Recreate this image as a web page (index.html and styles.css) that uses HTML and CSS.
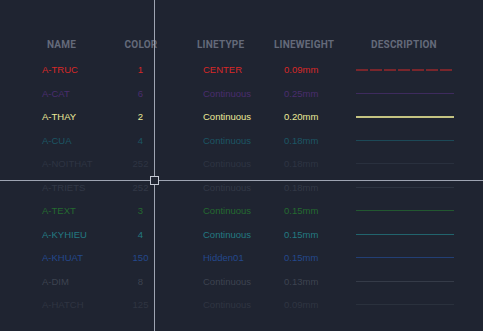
FILE: index.html
```html
<!DOCTYPE html>
<html>
<head>
<meta charset="utf-8">
<link rel="stylesheet" href="styles.css">
</head>
<body>
<div class="screen">
  <div class="table">
    <div class="row head">
      <div class="c1 h">NAME</div>
      <div class="c2 h">COLOR</div>
      <div class="c3 h">LINETYPE</div>
      <div class="c4 h">LINEWEIGHT</div>
      <div class="c5 h">DESCRIPTION</div>
    </div>
    <div class="row red">
      <div class="c1">A-TRUC</div><div class="c2">1</div><div class="c3">CENTER</div><div class="c4">0.09mm</div>
      <div class="c5"><svg class="dash" width="98" height="2" viewBox="0 0 98 2"><line x1="0" y1="1" x2="98" y2="1" stroke="#d42828" stroke-width="1.2" stroke-dasharray="12 2"/></svg></div>
    </div>
    <div class="row purple">
      <div class="c1">A-CAT</div><div class="c2">6</div><div class="c3">Continuous</div><div class="c4">0.25mm</div>
      <div class="c5"><span class="ln"></span></div>
    </div>
    <div class="row yellow">
      <div class="c1">A-THAY</div><div class="c2">2</div><div class="c3">Continuous</div><div class="c4">0.20mm</div>
      <div class="c5"><span class="ln thick"></span></div>
    </div>
    <div class="row teal">
      <div class="c1">A-CUA</div><div class="c2">4</div><div class="c3">Continuous</div><div class="c4">0.18mm</div>
      <div class="c5"><span class="ln"></span></div>
    </div>
    <div class="row dim">
      <div class="c1">A-NOITHAT</div><div class="c2">252</div><div class="c3">Continuous</div><div class="c4">0.18mm</div>
      <div class="c5"><span class="ln"></span></div>
    </div>
    <div class="row dim2">
      <div class="c1">A-TRIETS</div><div class="c2">252</div><div class="c3">Continuous</div><div class="c4">0.18mm</div>
      <div class="c5"><span class="ln"></span></div>
    </div>
    <div class="row green">
      <div class="c1">A-TEXT</div><div class="c2">3</div><div class="c3">Continuous</div><div class="c4">0.15mm</div>
      <div class="c5"><span class="ln"></span></div>
    </div>
    <div class="row cyan">
      <div class="c1">A-KYHIEU</div><div class="c2">4</div><div class="c3">Continuous</div><div class="c4">0.15mm</div>
      <div class="c5"><span class="ln"></span></div>
    </div>
    <div class="row blue">
      <div class="c1">A-KHUAT</div><div class="c2">150</div><div class="c3">Hidden01</div><div class="c4">0.15mm</div>
      <div class="c5"><span class="ln"></span></div>
    </div>
    <div class="row gray">
      <div class="c1">A-DIM</div><div class="c2">8</div><div class="c3">Continuous</div><div class="c4">0.13mm</div>
      <div class="c5"><span class="ln"></span></div>
    </div>
    <div class="row dim3">
      <div class="c1">A-HATCH</div><div class="c2">125</div><div class="c3">Continuous</div><div class="c4">0.09mm</div>
      <div class="c5"><span class="ln"></span></div>
    </div>
  </div>
  <div class="cross-v"></div>
  <div class="cross-h"></div>
  <div class="cross-box"></div>
</div>
</body>
</html>
```
FILE: styles.css
```css
html, body {
  margin: 0;
  padding: 0;
  background: #1f2431;
}
.screen {
  position: relative;
  width: 483px;
  height: 331px;
  overflow: hidden;
  background: #1f2431;
  font-family: "Liberation Sans", Arial, sans-serif;
  font-size: 9.5px;
}
.table {
  display: flex;
  flex-direction: column;
  padding: 37px 0 0 42px;
}
.row {
  display: grid;
  grid-template-columns: 76px 45px 101px 86px 110px;
  height: 23.5px;
  align-items: center;
}
.row.head {
  height: 14px;
  margin-bottom: 7px;
}
.h {
  font-family: Roboto, "DejaVu Sans", sans-serif;
  font-weight: 700;
  font-size: 10px;
  letter-spacing: 0.2px;
  color: #646a7a;
}
.c2 { text-align: center; }
.head .c1 { padding-left: 5px; }
.head .c2 { text-align: center; padding-left: 1px; }
.head .c3 { padding-left: 34px; }
.head .c4 { padding-left: 10px; }
.head .c5 { padding-left: 21px; }
.c3 { padding-left: 40px; }
.c4 { padding-left: 20px; }
.c5 { padding-left: 6px; display: flex; align-items: center; }
.ln {
  display: block;
  width: 98px;
  height: 1px;
  background: currentColor;
  opacity: 0.75;
}
.ln.thick { height: 2px; opacity: 0.9; }
.dash { display: block; }
.red { color: #d82828; }
.purple { color: #4a2d6e; }
.yellow { color: #ecea98; }
.yellow .ln { background: #d6d58c; }
.teal { color: #1c5664; }
.dim { color: #2e3443; }
.dim2 { color: #323846; }
.green { color: #246a30; }
.cyan { color: #237a82; }
.blue { color: #24488c; }
.gray { color: #3d4350; }
.dim3 { color: #2f3542; }
.cross-v {
  position: absolute;
  left: 154px;
  top: 0;
  width: 1px;
  height: 331px;
  background: #9ea4b2;
}
.cross-h {
  position: absolute;
  left: 0;
  top: 180px;
  width: 483px;
  height: 1px;
  background: #9ea4b2;
}
.cross-box {
  position: absolute;
  left: 150px;
  top: 176px;
  width: 7px;
  height: 7px;
  border: 1px solid #c4c9d4;
  background: #1f2431;
}
```
